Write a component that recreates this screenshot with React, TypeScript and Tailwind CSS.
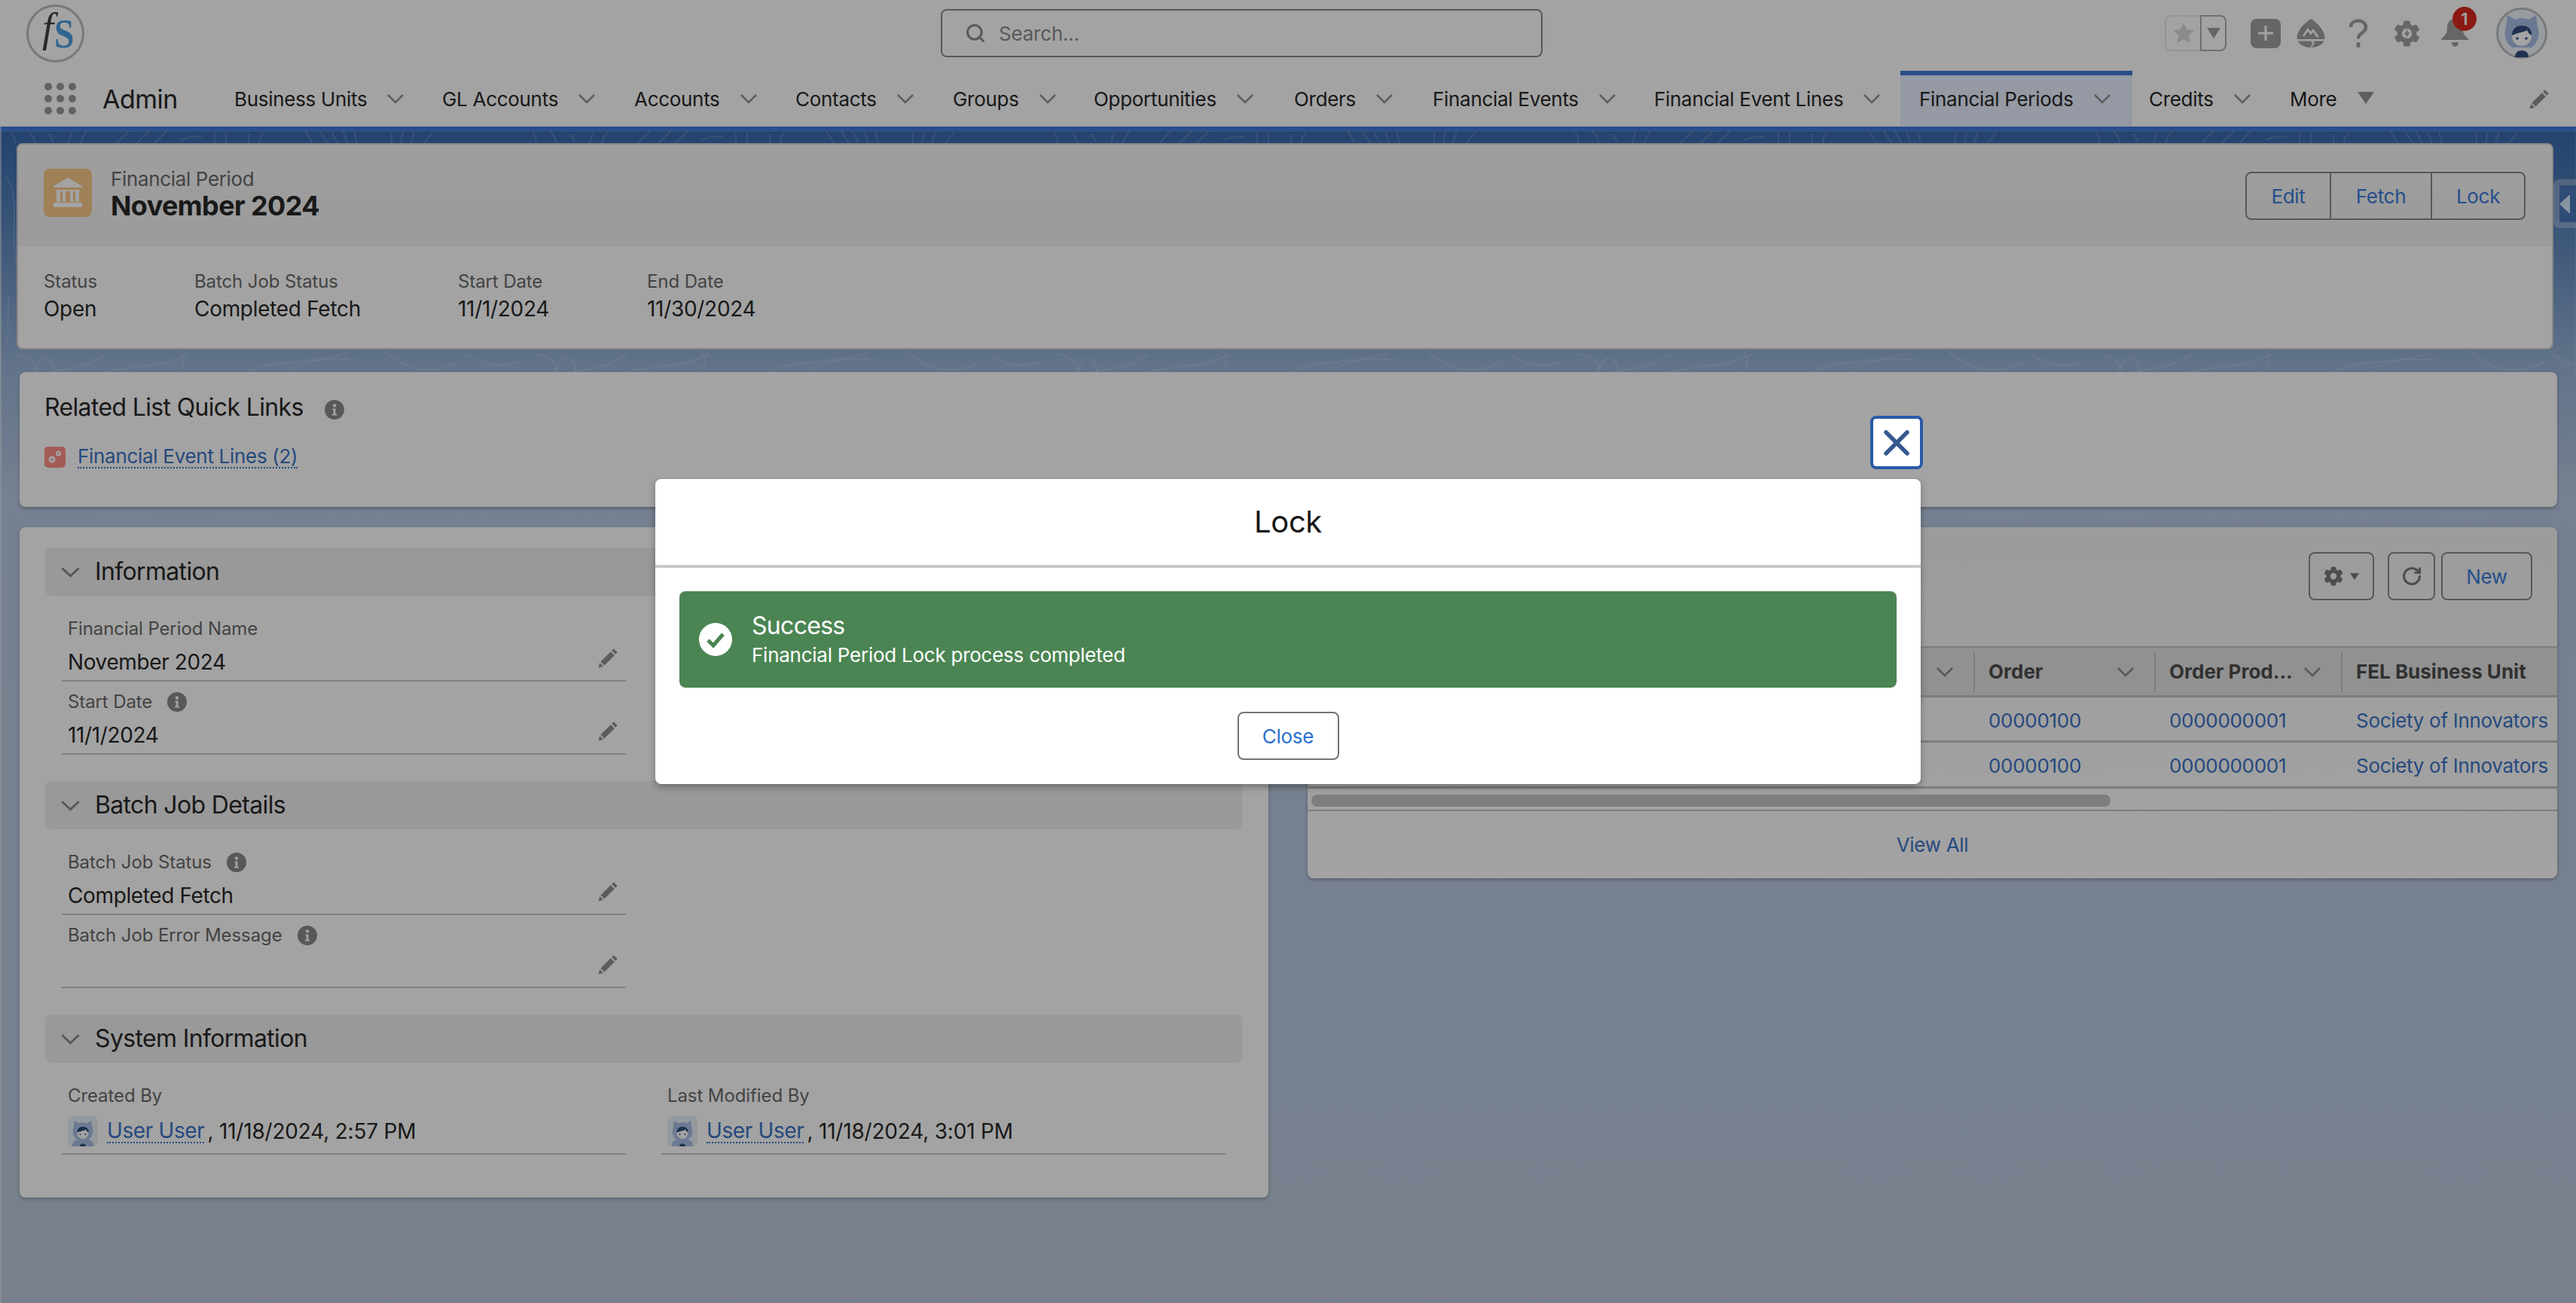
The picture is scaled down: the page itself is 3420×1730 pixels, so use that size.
import React from "react";
import { Search, RotateCw } from "lucide-react";

const Chevron = ({ w = 24, h = 14, cls = "text-[#949494]" }: { w?: number; h?: number; cls?: string }) => (
  <svg width={w} height={h} viewBox="0 0 24 14" className={`${cls} shrink-0`} preserveAspectRatio="none">
    <path d="M2 2l10 10L22 2" fill="none" stroke="currentColor" strokeWidth="2.6" />
  </svg>
);

const Pencil = ({ cls = "" }: { cls?: string }) => (
  <svg width="27" height="27" viewBox="0 0 27 27" className={`text-[#909090] shrink-0 ${cls}`} fill="currentColor">
    <path d="M20.8 1.2l5 5-2.6 2.6-5-5z" />
    <path d="M16.8 5.2l5 5L8.4 23.6l-5-5z" />
    <path d="M2.2 20l4.8 4.8-6.4 1.6z" />
  </svg>
);

const Info = ({ cls = "" }: { cls?: string }) => (
  <svg width="26" height="26" viewBox="0 0 26 26" className={`shrink-0 ${cls}`}>
    <circle cx="13" cy="13" r="13" fill="#8a8a8a" />
    <circle cx="13" cy="7.5" r="2.2" fill="#fff" />
    <path d="M10.5 11.5h4v7h1.6v2h-6v-2h1.6v-5h-1.2z" fill="#fff" />
  </svg>
);

const Gear = ({ size = 34, bolt = false, cls = "text-[#a0a0a0]" }: { size?: number; bolt?: boolean; cls?: string }) => (
  <svg width={size} height={size} viewBox="0 0 34 34" className={cls}>
    {[0, 60, 120, 180, 240, 300].map((a) => (
      <rect key={a} x="12.5" y="0.5" width="9" height="9" rx="2.5" fill="currentColor" transform={`rotate(${a} 17 17)`} />
    ))}
    <circle cx="17" cy="17" r={bolt ? 9.5 : 9} fill="none" stroke="currentColor" strokeWidth={bolt ? 6 : 7} />
    {bolt && <path d="M18.5 10.5l-5 8h3.2l-1.4 5.2 5.4-8h-3.2z" fill="currentColor" />}
  </svg>
);

const Astro = ({ size, round = false, bg = "#e8eff8" }: { size: number; round?: boolean; bg?: string }) => (
  <svg width={size} height={size} viewBox="0 0 68 68" className="shrink-0">
    {round ? <circle cx="34" cy="34" r="32.5" fill={bg} stroke="#bdbdbd" strokeWidth="3" /> : <rect width="68" height="68" rx="12" fill={bg} />}
    <path d="M15 10l10 6a22 22 0 0 1 18 0l10-6 2 16a23 23 0 0 1-8 27 H21a23 23 0 0 1-8-27z" fill="#aabee4" />
    <path d="M34 17c-11 0-17 8-17 17s7 17 17 17 17-8 17-17-6-17-17-17z" fill="#aabee4" />
    <circle cx="34" cy="38" r="13" fill="#fff" />
    <path d="M21 37c0-9 6-13 13-13s14 4 13 13c-3-2-5-4-6-7-4 3-12 3-20 7z" fill="#2f4d7d" />
    <circle cx="28" cy="41" r="1.8" fill="#2f4d7d" />
    <circle cx="40" cy="41" r="1.8" fill="#2f4d7d" />
    {round ? (
      <path d="M25 66c0-6 4-9 9-9s9 3 9 9z" fill="#2f4d7d" />
    ) : (
      <>
        <path d="M10 68c0-10 6-15 14-15h20c8 0 14 5 14 15z" fill="#aabee4" />
        <path d="M27 68c0-4 3-6 7-6s7 2 7 6z" fill="#2f4d7d" />
      </>
    )}
  </svg>
);

const navItems = [
  { t: "Business Units", w: "w-[276px]" },
  { t: "GL Accounts", w: "w-[255px]" },
  { t: "Accounts", w: "w-[214px]" },
  { t: "Contacts", w: "w-[209px]" },
  { t: "Groups", w: "w-[187px]" },
  { t: "Opportunities", w: "w-[266px]" },
  { t: "Orders", w: "w-[184px]" },
  { t: "Financial Events", w: "w-[294px]" },
  { t: "Financial Event Lines", w: "w-[327px]" },
];

const TopIcons = () => (
  <div className="ml-auto mr-[38px] flex items-center h-[88px]">
    <div className="flex w-[82px] h-[48px] rounded-lg border-2 border-[#eaeaea] mt-[-1px]">
      <div className="w-[45px] flex items-center justify-center">
        <svg width="32" height="32" viewBox="0 0 24 24" fill="#d8d8d8"><path d="M12 1.5l3.2 7 7.3.7-5.5 5 1.6 7.5L12 18l-6.600 3.7L7 14.200l-5.500-5 7.300-.7z" /></svg>
      </div>
      <div className="flex-1 flex items-center justify-center border-2 rounded-r-lg border-[#b0b0b0] -my-[2px] -mr-[2px]">
        <svg width="18" height="14" viewBox="0 0 18 14" fill="#a0a0a0"><path d="M0 0h18L9 14z" /></svg>
      </div>
    </div>
    <div className="ml-[32px] w-[40px] h-[39px] rounded-lg bg-[#a0a0a0] flex items-center justify-center">
      <svg width="24" height="24" viewBox="0 0 24 24" stroke="#fff" strokeWidth="3"><path d="M12 2v20M2 12h20" /></svg>
    </div>
    <svg width="38" height="38" viewBox="0 0 38 38" className="ml-[21px]">
      <path d="M19 0C28 6 36 14 37.500 24c.5 7-6 14-18.500 14S.5 31 .5 24C2 14 10 6 19 0z" fill="#a0a0a0" />
      <path d="M8 22l7-10 4 5 3-4 8 11-3 .5-5-7-3 4-4-5-5 7z" fill="#fff" />
      <path d="M0 27h38v2.500H22l2 3-4 5.500-1.500-1 3-4.500-2.500-3H0z" fill="#fff" />
    </svg>
    <svg width="26" height="38" viewBox="0 0 26 38" fill="none" className="ml-[31px]">
      <path d="M3 11c0-5.500 4.500-8.500 10-8.500S23 6 23 11c0 4-2.500 6-5.500 8-2.500 1.700-4.500 3-4.500 7.500" stroke="#a0a0a0" strokeWidth="4.500" />
      <rect x="10.500" y="31" width="5" height="7" rx="2" fill="#a0a0a0" />
    </svg>
    <Gear size={35} bolt cls="text-[#a0a0a0] ml-[34px]" />
    <div className="relative ml-[28px] w-[37px] h-[38px]">
      <svg width="37" height="38" viewBox="0 0 37 38" fill="#a0a0a0">
        <path d="M18.500 0c7 0 10 5 10 11 0 7 2 11 6 14 2 1 2.500 3 1 3H1c-1.500 0-1-2 1-3 4-3 6-7 6-14C8 5 11.500 0 18.500 0z" />
        <path d="M14 31h9c0 3-2 6-4.500 6S14 34 14 31z" />
      </svg>
      <div className="absolute left-[15px] top-[-16px] w-[32px] h-[32px] rounded-full bg-[#d9281e] text-white text-[22px] leading-[32px] text-center font-semibold">1</div>
    </div>
    <div className="ml-[36px]"><Astro size={68} round bg="#eef4fc" /></div>
  </div>
);

const Header = () => (
  <header className="bg-white border-b-[6px] border-[#427bdb] h-[174px]">
    <div className="flex items-start h-[94px]">
      <svg width="77" height="77" viewBox="0 0 77 77" className="ml-[35px] mt-[6px]">
        <circle cx="38.500" cy="38.500" r="37" fill="#fff" stroke="#bcbcbc" strokeWidth="3" />
        <text x="21" y="49" fontFamily="Liberation Serif" fontStyle="italic" fontSize="54" fill="#404040">f</text>
        <text transform="translate(37 57) scale(0.85 1)" fontFamily="Liberation Serif" fontWeight="700" fontSize="56" fill="#4a9fe1">S</text>
      </svg>
      <div className="ml-[1137px] mt-[12px] w-[799px] h-[64px] rounded-lg border-2 border-[#8a8a8a] flex items-center pl-[30px] text-[#8c8c8c]">
        <Search size={28} strokeWidth={2.6} />
        <span className="ml-[17px] text-[26px] tracking-[-0.2px]">Search...</span>
      </div>
      <TopIcons />
    </div>
    <nav className="flex items-center h-[74px]">
      <div className="ml-[59px] w-[42px] grid grid-cols-3 gap-[6px]">
        {Array.from({ length: 9 }).map((_, i) => (
          <span key={i} className="w-[10px] h-[10px] rounded-full bg-[#999]" />
        ))}
      </div>
      <span className="ml-[35px] w-[175px] text-[34px] text-[#282828] tracking-[-0.5px]">Admin</span>
      {navItems.map((n) => (
        <div key={n.t} className={`flex items-center h-full ${n.w} text-[#282828]`}>
          <span className="text-[26px] tracking-[-0.3px] whitespace-nowrap">{n.t}</span>
          <Chevron cls="ml-[26px] text-[#949494]" />
        </div>
      ))}
      <div className="flex items-center h-full w-[308px] pl-[25px] pb-[6px] bg-[#e9efff] border-t-[6px] border-[#427bdb] text-[#282828]">
        <span className="text-[26px] tracking-[-0.3px] whitespace-nowrap">Financial Periods</span>
        <Chevron cls="ml-[26px] text-[#949494]" />
      </div>
      <div className="flex items-center h-full ml-[22px] w-[187px] text-[#282828]">
        <span className="text-[26px] tracking-[-0.3px]">Credits</span>
        <Chevron cls="ml-[26px] text-[#949494]" />
      </div>
      <div className="flex items-center h-full text-[#282828]">
        <span className="text-[26px] tracking-[-0.3px]">More</span>
        <svg width="22" height="16" viewBox="0 0 22 16" fill="#949494" className="ml-[28px] mb-[2px]"><path d="M0 0h22L11 16z" /></svg>
      </div>
      <Pencil cls="ml-auto mr-[35px]" />
    </nav>
  </header>
);

const Contours = () => (
  <svg className="absolute left-0 top-0 w-full h-[330px]" fill="none" stroke="#ffffff" strokeOpacity="0.14" strokeWidth="2">
    <defs>
      <pattern id="c" width="692" height="560" patternUnits="userSpaceOnUse">
        <path d="M15 2c3 4 5 8 5 14M38 0c4 4 7 8 9 16M65 4l6 10M95 2l-4 14M115 0c-4 6-6 10-8 16" />
        <path d="M155 16l16-16M182 16L198 0M205 16L221 0M240 12c8-4 18-6 28-4M285 2v14M300 2v14M330 4v12M350 2c-4 4-6 8-6 14" />
        <path d="M405 0l10 16M425 0l10 16M440 0l8 16M455 0l6 16M470 0l4 16M520 2v14M535 1l-3 15M550 1l-5 15M575 1l-12 15" />
        <path d="M8 60c20 30 5 70 14 120M30 70c-10 40-6 90 6 130M12 220l-2 40M14 260l-6 24" />
        <path d="M20 296c30 6 30 20 20 30M50 322c30-4 70-8 90-26M130 322c60-14 80-6 120-26M240 292c10 20 0 28-20 34" />
        <path d="M330 320c40-20 80-8 130-26M380 326c10-20 50-26 90-22M510 292c30 24 60 36 100 14M620 296c20 14 40 20 70 10" />
        <ellipse cx="60" cy="318" rx="12" ry="16" />
      </pattern>
    </defs>
    <rect width="100%" height="100%" fill="url(#c)" />
  </svg>
);

const Label = ({ children, info }: { children: React.ReactNode; info?: boolean }) => (
  <div className="flex items-center h-[28px] text-[24px] leading-[28px] text-[#6a6a6a] tracking-[-0.1px]">
    <span>{children}</span>
    {info && <Info cls="ml-[20px]" />}
  </div>
);

const Field = ({ label, value, info, edit = true, system = false }: { label: string; value?: React.ReactNode; info?: boolean; edit?: boolean; system?: boolean }) => (
  <div className={`w-[749px] ${system ? "h-[105px]" : "h-[97px]"} border-b-2 border-[#c8c8c8] pt-[13px] pl-[8px] pr-[10px]`}>
    <Label info={info}>{label}</Label>
    <div className={`flex justify-between h-[28px] ${system ? "mt-[19px] items-center" : "mt-[16px] items-start"} text-[28px] leading-[28px] text-[#282828] tracking-[-0.38px]`}>
      <div className="flex items-center">{value}</div>
      {edit && <Pencil cls="-mt-[5px]" />}
    </div>
  </div>
);

const Section = ({ title, cls = "" }: { title: string; cls?: string }) => (
  <div className={`h-[64px] rounded-lg bg-[#f0f0f0] flex items-center pl-[20px] ${cls}`}>
    <Chevron w={27} h={15} cls="text-[#8a8a8a]" />
    <span className="ml-[19px] text-[32px] text-[#282828] tracking-[-0.65px]">{title}</span>
  </div>
);

const UserLink = ({ when }: { when: string }) => (
  <>
    <Astro size={40} />
    <span className="ml-[12px] text-[#3b72c6] border-b-2 border-dotted border-[#3b72c6] leading-[30px]">User User</span>
    <span className="ml-[4px] tracking-[-0.2px]">, {when}</span>
  </>
);

const Highlights = () => (
  <section className="ml-[22px] w-[3368px] h-[274px] rounded-lg border-2 border-[#d4d4d4] overflow-hidden bg-white">
    <div className="h-[135px] flex items-start bg-gradient-to-b from-[#f9f9f9] to-[#f2f2f2]">
      <div className="ml-[34px] mt-[32px] w-[64px] h-[64px] rounded-lg bg-[#fac989] flex items-center justify-center">
        <svg width="38" height="40" viewBox="0 0 38 40" fill="#fff">
          <path d="M19 0l19 11v2H0v-2z" />
          <rect x="3" y="16" width="32" height="2" rx="1" />
          <rect x="4" y="18" width="5" height="14" />
          <rect x="12" y="18" width="4" height="14" />
          <rect x="22" y="18" width="4" height="14" />
          <rect x="29" y="18" width="5" height="14" />
          <rect x="0" y="33" width="38" height="6" rx="1" />
        </svg>
      </div>
      <div className="ml-[25px] mt-[31px]">
        <div className="text-[26px] leading-[30px] text-[#6a6a6a] tracking-[-0.35px]">Financial Period</div>
        <div className="text-[36px] leading-[40px] font-bold text-[#282828] tracking-[-0.6px]">November 2024</div>
      </div>
      <div className="ml-auto mr-[35px] mt-[36px] flex h-[64px] rounded-lg border-2 border-[#8a8a8a] text-[26px] text-[#3a7bdc] tracking-[-0.3px]">
        <div className="w-[112px] flex items-center justify-center border-r-2 border-[#8a8a8a]">Edit</div>
        <div className="w-[134px] flex items-center justify-center border-r-2 border-[#8a8a8a]">Fetch</div>
        <div className="w-[122px] flex items-center justify-center">Lock</div>
      </div>
    </div>
    <div className="flex pl-[34px] pt-[33px]">
      {[
        ["Status", "Open", "w-[200px]"],
        ["Batch Job Status", "Completed Fetch", "w-[350px]"],
        ["Start Date", "11/1/2024", "w-[251px]"],
        ["End Date", "11/30/2024", "w-[250px]"],
      ].map(([l, v, w]) => (
        <div key={l} className={w}>
          <Label>{l}</Label>
          <div className="mt-[8px] text-[28px] leading-[28px] text-[#282828] tracking-[-0.3px]">{v}</div>
        </div>
      ))}
    </div>
  </section>
);

const RelatedLinks = () => (
  <section className="ml-[26px] mt-[30px] w-[3369px] h-[179px] rounded-lg bg-white shadow-[0_2px_4px_rgba(0,0,0,0.25)] pl-[33px] pt-[27px]">
    <div className="flex items-center h-[40px]">
      <span className="text-[32px] text-[#282828] tracking-[-0.65px]">Related List Quick Links</span>
      <Info cls="ml-[28px] mt-[6px]" />
    </div>
    <div className="flex items-center mt-[31px]">
      <div className="w-[28px] h-[28px] rounded-[5px] bg-[#ff9185] flex items-center justify-center">
        <svg width="20" height="20" viewBox="0 0 20 20" fill="#fff">
          <circle cx="6" cy="13" r="4.500" />
          <circle cx="14.500" cy="5" r="3.500" />
          <circle cx="6" cy="13" r="1.500" fill="#ff9185" />
          <circle cx="14.500" cy="5" r="1.200" fill="#ff9185" />
        </svg>
      </div>
      <span className="ml-[16px] text-[26px] leading-[28px] text-[#3b72c6] border-b-2 border-dotted border-[#3b72c6] tracking-[-0.3px]">Financial Event Lines (2)</span>
    </div>
  </section>
);

const DetailsCard = () => (
  <section className="w-[1658px] h-[890px] rounded-lg bg-white shadow-[0_2px_4px_rgba(0,0,0,0.25)] pl-[34px] pr-[35px] pt-[27px]">
    <Section title="Information" />
    <div className="ml-[22px] mt-[17px]">
      <Field label="Financial Period Name" value="November 2024" />
      <Field label="Start Date" info value="11/1/2024" />
    </div>
    <Section title="Batch Job Details" cls="mt-[35px]" />
    <div className="ml-[22px] mt-[17px]">
      <Field label="Batch Job Status" info value="Completed Fetch" />
      <Field label="Batch Job Error Message" info />
    </div>
    <Section title="System Information" cls="mt-[35px]" />
    <div className="ml-[22px] mt-[17px] flex gap-[47px]">
      <Field system edit={false} label="Created By" value={<UserLink when="11/18/2024, 2:57 PM" />} />
      <Field system edit={false} label="Last Modified By" value={<UserLink when="11/18/2024, 3:01 PM" />} />
    </div>
  </section>
);

const Row = ({ cls = "h-[60px]" }: { cls?: string }) => (
  <div className={`flex items-center pt-[3px] border-b-[3px] border-[#c4c4c4] text-[26px] text-[#3b72c6] tracking-[-0.3px] ${cls}`}>
    <div className="w-[904px]" />
    <div className="w-[240px]">00000100</div>
    <div className="w-[248px]">0000000001</div>
    <div className="whitespace-nowrap">Society of Innovators</div>
  </div>
);

const HeadCell = ({ t, w, chev = true, pl = "pl-[18px]" }: { t?: string; w: string; chev?: boolean; pl?: string }) => (
  <div className={`flex items-center justify-between h-[54px] ${w} ${pl} pr-[26px] border-r-2 border-[#c4c4c4] last:border-r-0 whitespace-nowrap`}>
    <span>{t}</span>
    {chev && <Chevron cls="text-[#8a8a8a]" />}
  </div>
);

const RelatedCard = () => (
  <section className="w-[1659px] h-[466px] rounded-lg bg-gradient-to-b from-[#f4f4f4] to-white shadow-[0_2px_4px_rgba(0,0,0,0.25)] overflow-hidden">
    <div className="h-[158px] flex justify-end items-start pt-[33px] pr-[33px]">
      <div className="w-[87px] h-[64px] rounded-lg border-2 border-[#8a8a8a] flex items-center justify-center gap-[9px]">
        <Gear size={26} cls="text-[#7a7a7a]" />
        <svg width="12" height="9" viewBox="0 0 12 9" fill="#7a7a7a"><path d="M0 0h12L6 9z" /></svg>
      </div>
      <div className="ml-[18px] w-[63px] h-[64px] rounded-lg border-2 border-[#8a8a8a] flex items-center justify-center text-[#7a7a7a]">
        <RotateCw size={28} strokeWidth={2.6} />
      </div>
      <div className="ml-[8px] w-[121px] h-[64px] rounded-lg border-2 border-[#8a8a8a] flex items-center justify-center text-[26px] text-[#3a7bdc] tracking-[-0.3px]">New</div>
    </div>
    <div className="flex items-center h-[68px] bg-[#e3e3e3] border-t-2 border-b-[3px] border-[#c4c4c4] text-[26px] font-bold text-[#4e4e4e] tracking-[0px]">
      <HeadCell w="w-[886px]" />
      <HeadCell t="Order" w="w-[240px]" />
      <HeadCell t="Order Prod..." w="w-[248px]" pl="pl-[18px] pr-[12px]" />
      <HeadCell t="FEL Business Unit" w="w-[285px]" chev={false} />
    </div>
    <Row />
    <Row cls="h-[61px]" />
    <div className="h-[30px] border-b-2 border-[#c4c4c4] flex items-center pl-[5px] pt-[4px]">
      <div className="w-[1061px] h-[16px] rounded-full bg-[#c6c6c6]" />
    </div>
    <div className="h-[89px] flex items-center justify-center text-[26px] text-[#3b72c6] tracking-[-0.3px]">View All</div>
  </section>
);

const LockModal = () => (
  <div className="absolute inset-0 bg-black/36">
    <button className="absolute left-[2483px] top-[552px] w-[70px] h-[71px] rounded-lg bg-white border-4 border-[#2a5aa8] flex items-center justify-center">
      <svg width="34" height="34" viewBox="0 0 34 34" stroke="#37588f" strokeWidth="5.500" strokeLinecap="round"><path d="M3 3l28 28M31 3L3 31" /></svg>
    </button>
    <div className="absolute left-[870px] top-[636px] w-[1680px] h-[405px] rounded-lg bg-white shadow-[0_4px_10px_rgba(0,0,0,0.3)] flex flex-col">
      <div className="h-[118px] shrink-0 border-b-4 border-[#c9c9c9] flex items-center justify-center text-[40px] text-[#181818] tracking-[-0.4px]">Lock</div>
      <div className="mx-[32px] mt-[31px] h-[128px] rounded-lg bg-[#4b8553] flex items-center pl-[26px] text-white">
        <svg width="44" height="44" viewBox="0 0 44 44">
          <circle cx="22" cy="22" r="22" fill="#fff" />
          <path d="M12 23l7 7 13-15" fill="none" stroke="#4b8553" strokeWidth="5" />
        </svg>
        <div className="ml-[26px]">
          <div className="text-[32px] leading-[38px] tracking-[-0.7px]">Success</div>
          <div className="mt-[4px] text-[26px] leading-[32px] tracking-[-0.25px]">Financial Period Lock process completed</div>
        </div>
      </div>
      <div className="flex justify-center mt-[32px]">
        <button className="w-[135px] h-[64px] rounded-lg border-2 border-[#747474] text-[26px] text-[#2a6fd0] tracking-[-0.3px]">Close</button>
      </div>
    </div>
  </div>
);

export default function App() {
  return (
    <div className="relative w-[3420px] h-[1730px] overflow-hidden bg-white font-[Inter,sans-serif]">
      <Header />
      <main className="relative h-[1556px] bg-[linear-gradient(180deg,#386aad_0px,#4f7cb6_90px,#99b4d8_310px,#b8c8e1_480px,#bcc8dd_100%)]">
        <Contours />
        <div className="relative pt-[16px]">
          <Highlights />
          <RelatedLinks />
          <div className="ml-[26px] mt-[27px] flex gap-[52px] items-start">
            <DetailsCard />
            <RelatedCard />
          </div>
        </div>
        <div className="absolute right-0 top-[64px] w-[30px] h-[65px] rounded-l-lg bg-white/30 pl-[8px] py-[8px]">
          <div className="w-full h-full bg-[#4978b7] flex items-center">
            <svg width="14" height="26" viewBox="0 0 14 26" fill="#d4e9ff"><path d="M14 0v26L0 13z" /></svg>
          </div>
        </div>
      </main>
      <div className="absolute left-0 top-0 w-[2px] h-full bg-white/40" />
      <LockModal />
    </div>
  );
}
